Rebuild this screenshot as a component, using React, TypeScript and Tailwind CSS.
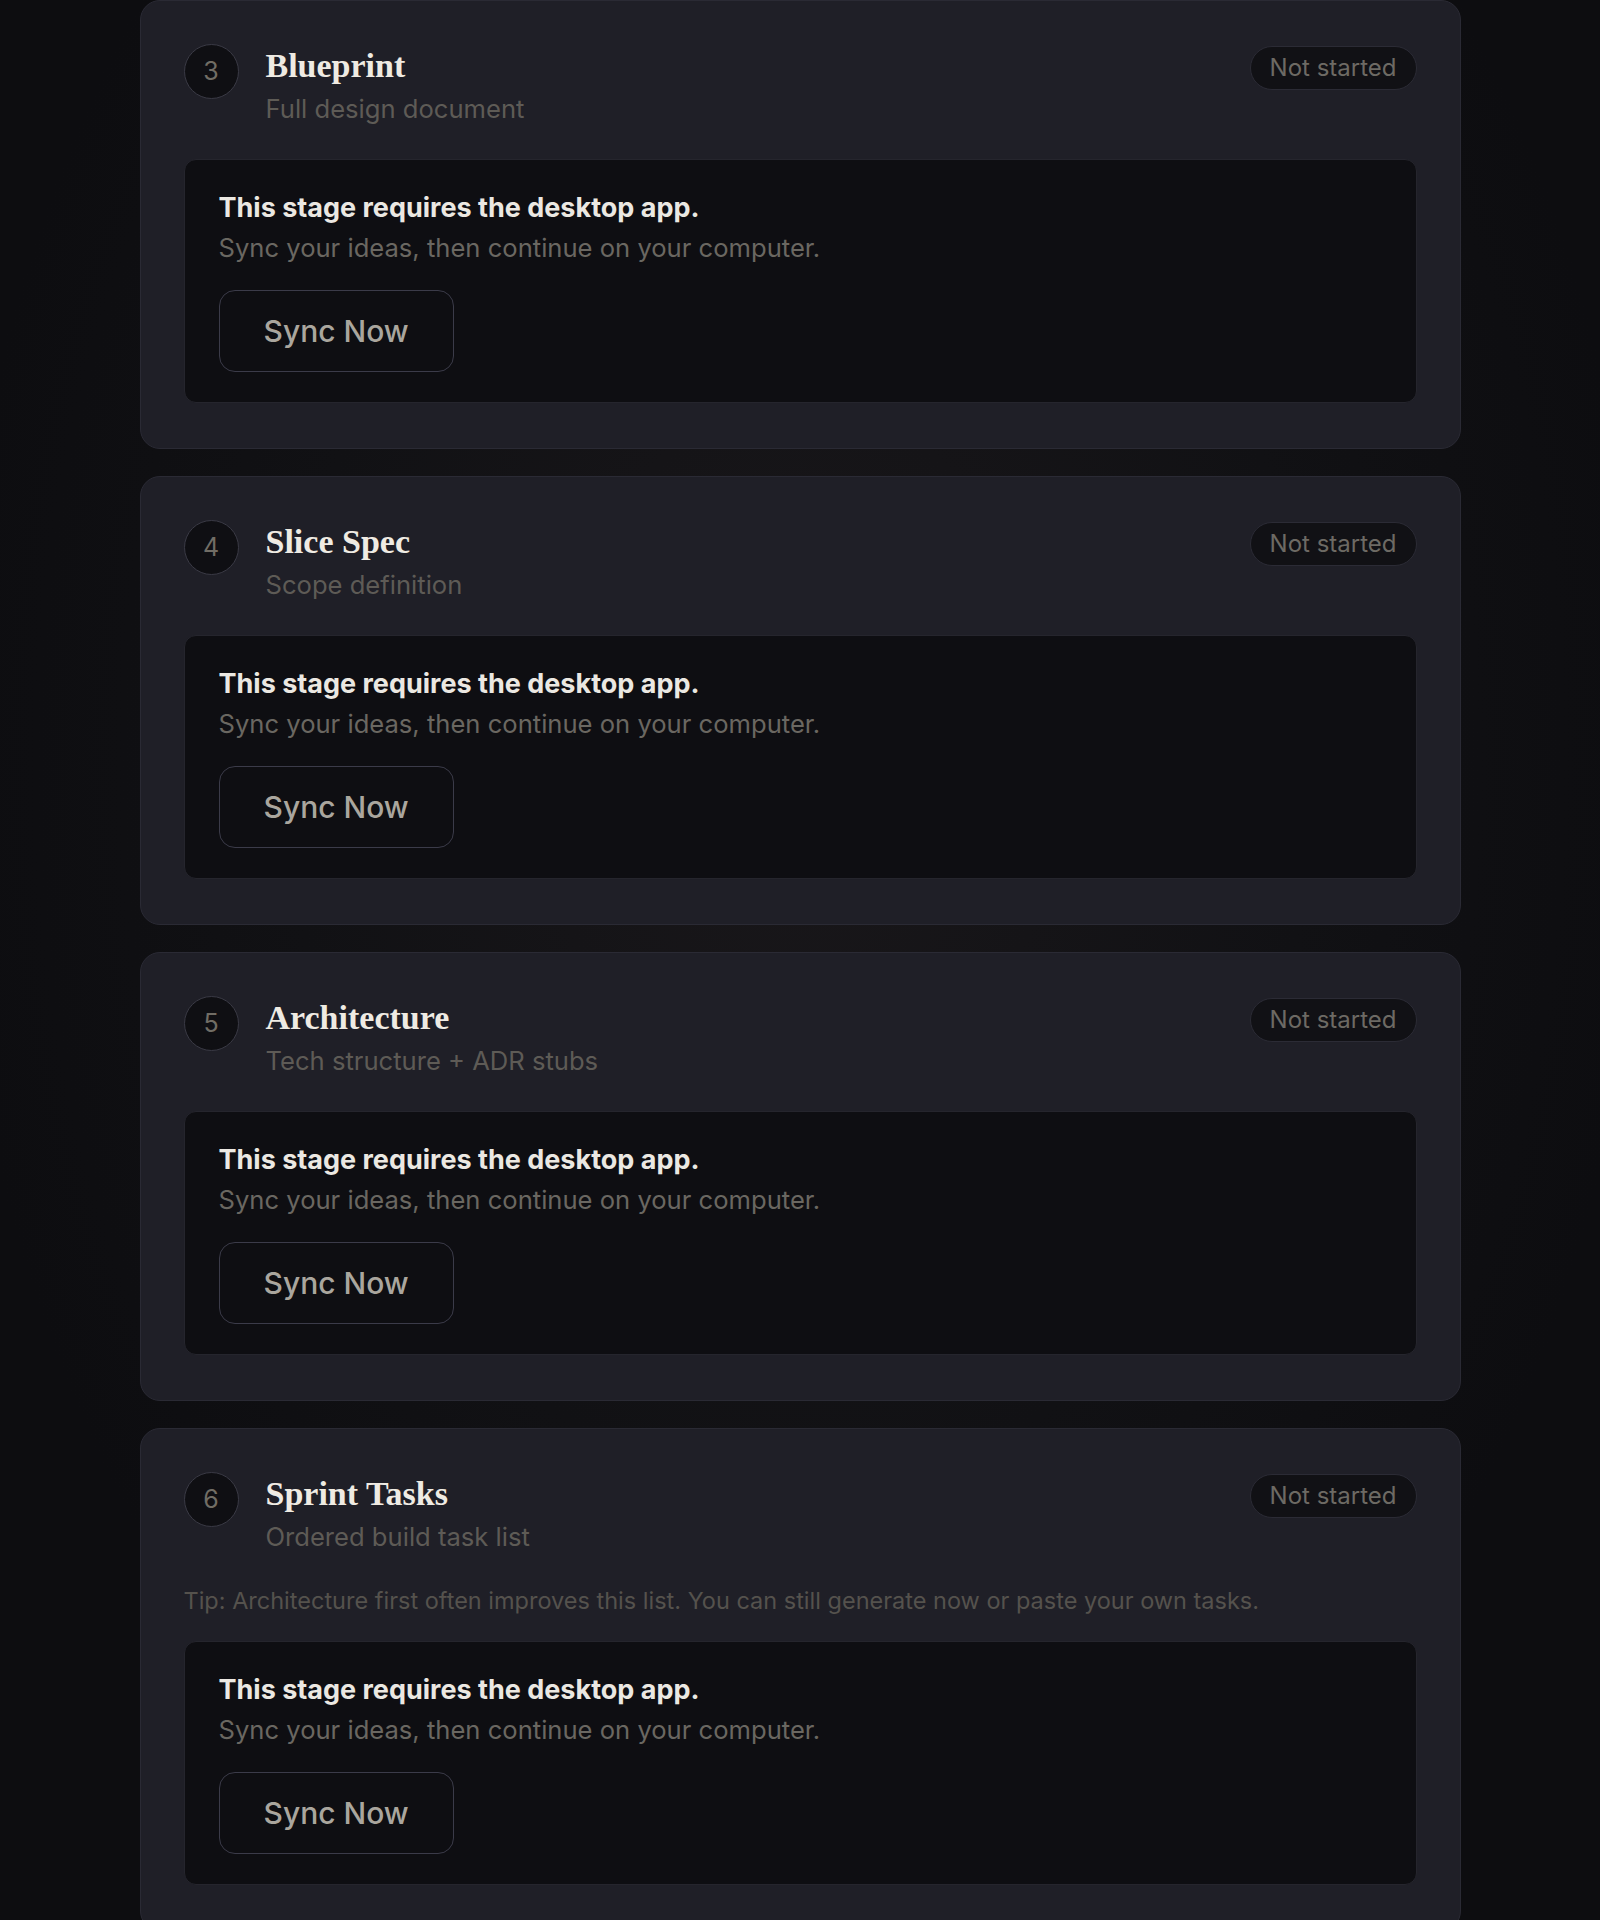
import React from "react";

type Stage = {
  n: number;
  title: string;
  subtitle: string;
  tip?: string;
};

const STAGES: Stage[] = [
  { n: 3, title: "Blueprint", subtitle: "Full design document" },
  { n: 4, title: "Slice Spec", subtitle: "Scope definition" },
  { n: 5, title: "Architecture", subtitle: "Tech structure + ADR stubs" },
  {
    n: 6,
    title: "Sprint Tasks",
    subtitle: "Ordered build task list",
    tip: "Tip: Architecture first often improves this list. You can still generate now or paste your own tasks.",
  },
];

function StatusBadge() {
  return (
    <span className="mt-[2px] flex h-[44px] items-center rounded-full border border-[#2b2b35] bg-[#111115] px-[19px] text-[24px] text-[#6d6a64]">
      Not started
    </span>
  );
}

function DesktopOnlyNotice() {
  return (
    <div className="rounded-[12px] border border-[#25252d] bg-[#0e0e12] px-[34px] py-[30px]">
      <p className="text-[27px] font-bold leading-[36px] text-[#ebe8e2]">
        This stage requires the desktop app.
      </p>
      <p className="mt-1 text-[25.6px] leading-[36px] text-[#6a6761]">
        Sync your ideas, then continue on your computer.
      </p>
      <button className="mt-[24px] h-[82px] rounded-[16px] border border-[#3b3b49] bg-transparent px-[44px] text-[30px] font-medium leading-[36px] text-[#aaa69e]">
        Sync Now
      </button>
    </div>
  );
}

function StageCard({ stage }: { stage: Stage }) {
  return (
    <section className="mx-auto w-[1321px] shrink-0 rounded-[20px] border border-[#2a2a34] bg-[#1f1f27] px-[43px] pt-[43px] pb-[45px]">
      <div className="mb-[34px] flex items-start justify-between">
        <div className="flex items-start gap-[27px]">
          <div className="flex size-[55px] items-center justify-center rounded-full border border-[#3a3a45] bg-[#0f0f13] text-[25px] text-[#716d65]">
            {stage.n}
          </div>
          <div>
            <h3 className="font-['Liberation_Serif',serif] text-[34px] font-bold leading-[44px] text-[#efebe3]">
              {stage.title}
            </h3>
            <p className="mt-[5px] text-[25.6px] leading-[32px] text-[#5e5b56]">
              {stage.subtitle}
            </p>
          </div>
        </div>
        <StatusBadge />
      </div>

      {stage.tip && (
        <p className="mb-[26px] text-[23.5px] leading-[28px] text-[#55524d]">
          {stage.tip}
        </p>
      )}

      <DesktopOnlyNotice />
    </section>
  );
}

export default function App() {
  return (
    <div className="h-[1920px] overflow-hidden bg-[#0d0d10] bg-[radial-gradient(ellipse_at_50%_40%,#19171a_0%,#111114_45%,#0d0d10_75%)] font-[Inter,sans-serif]">
      <div className="flex flex-col gap-[27px]">
        {STAGES.map((stage) => (
          <StageCard key={stage.n} stage={stage} />
        ))}
      </div>
    </div>
  );
}
